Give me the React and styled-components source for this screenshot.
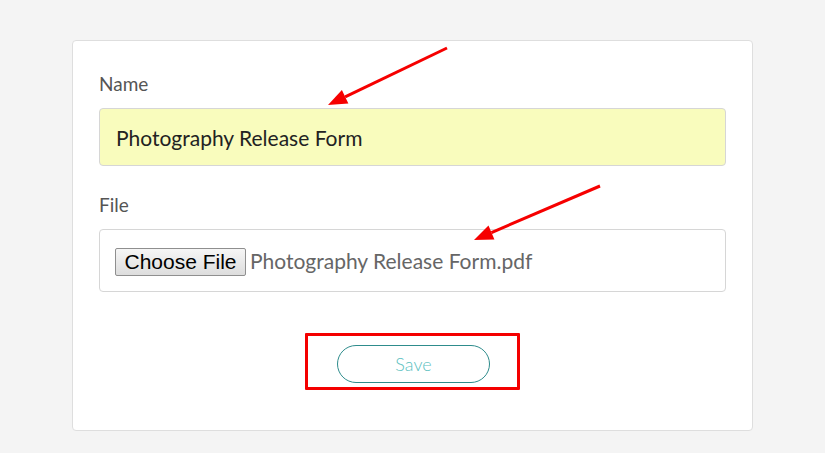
import React from "react";
import styled, { createGlobalStyle } from "styled-components";

const GlobalStyle = createGlobalStyle`
  html, body {
    margin: 0;
    padding: 0;
    background: #f4f4f4;
    font-family: Lato, "Open Sans", sans-serif;
  }
`;

const arrows = [
  { from: [447, 48], to: [328, 105] },
  { from: [600, 186], to: [474, 240] },
];

const headPoints = (from, to, len = 19, half = 7.5) => {
  const dx = to[0] - from[0];
  const dy = to[1] - from[1];
  const d = Math.hypot(dx, dy);
  const ux = dx / d;
  const uy = dy / d;
  const bx = to[0] - ux * len;
  const by = to[1] - uy * len;
  const px = -uy * half;
  const py = ux * half;
  return {
    base: [bx, by],
    pts: `${to[0]},${to[1]} ${bx + px},${by + py} ${bx - px},${by - py}`,
  };
};

const App = () => {
  return (
    <Page>
      <GlobalStyle />
      <Card>
        <Label>Name</Label>
        <NameInput defaultValue="Photography Release Form" />
        <Label $top={27}>File</Label>
        <FileBox>
          <ChooseButton type="button">Choose File</ChooseButton>
          <FileName>Photography Release Form.pdf</FileName>
        </FileBox>
        <Actions>
          <Highlight>
            <SaveButton type="button">Save</SaveButton>
          </Highlight>
        </Actions>
      </Card>
      <Overlay width="825" height="453" viewBox="0 0 825 453">
        {arrows.map((a, i) => {
          const h = headPoints(a.from, a.to);
          return (
            <g key={i}>
              <line
                x1={a.from[0]}
                y1={a.from[1]}
                x2={h.base[0]}
                y2={h.base[1]}
                stroke="#f60000"
                strokeWidth="3"
              />
              <polygon points={h.pts} fill="#f60000" />
            </g>
          );
        })}
      </Overlay>
    </Page>
  );
};

const Page = styled.div`
  position: relative;
  width: 825px;
  height: 453px;
  padding-top: 40px;
  box-sizing: border-box;
`;

const Card = styled.div`
  margin-left: 72px;
  width: 681px;
  height: 391px;
  box-sizing: border-box;
  background: #fff;
  border: 1px solid #dedede;
  border-radius: 4px;
  padding: 31px 26px 0 26px;
  display: flex;
  flex-direction: column;
`;

const Label = styled.div`
  margin-top: ${(p) => p.$top || 0}px;
  height: 24px;
  line-height: 24px;
  font-size: 19px;
  color: #555;
`;

const NameInput = styled.input`
  margin-top: 12px;
  height: 58px;
  box-sizing: border-box;
  width: 100%;
  background: #f9fcbd;
  border: 1px solid #d6d6d6;
  border-radius: 4px;
  padding: 0 16px;
  font-family: Lato, sans-serif;
  font-size: 21px;
  color: #222;
  outline: none;
`;

const FileBox = styled.div`
  margin-top: 12px;
  height: 63px;
  box-sizing: border-box;
  border: 1px solid #d6d6d6;
  border-radius: 4px;
  padding: 0 15px;
  display: flex;
  align-items: center;
`;

const ChooseButton = styled.button`
  width: 131px;
  height: 28px;
  padding: 0;
  box-sizing: border-box;
  font-family: "Liberation Sans", Arial, sans-serif;
  font-size: 21px;
  line-height: 24px;
  color: #000;
  background: linear-gradient(#f6f6f6, #dddddd);
  border: 1px solid #8f8f8f;
  border-radius: 2px;
  margin-top: 2px;
`;

const FileName = styled.span`
  margin-left: 4px;
  font-size: 21px;
  color: #666;
`;

const Actions = styled.div`
  margin-top: 41px;
  display: flex;
  justify-content: center;
`;

const Highlight = styled.div`
  width: 215px;
  height: 57px;
  box-sizing: border-box;
  border: 3px solid #f40000;
  border-radius: 1px;
  padding: 9px 0 0 29px;
`;

const SaveButton = styled.button`
  width: 153px;
  height: 38px;
  box-sizing: border-box;
  background: #fff;
  border: 1px solid #2e8c8c;
  border-radius: 19px;
  font-family: Lato, sans-serif;
  font-weight: 300;
  font-size: 18px;
  color: #5cbfbf;
  padding: 0;
`;

const Overlay = styled.svg`
  position: absolute;
  left: 0;
  top: 0;
  pointer-events: none;
`;

export default App;
